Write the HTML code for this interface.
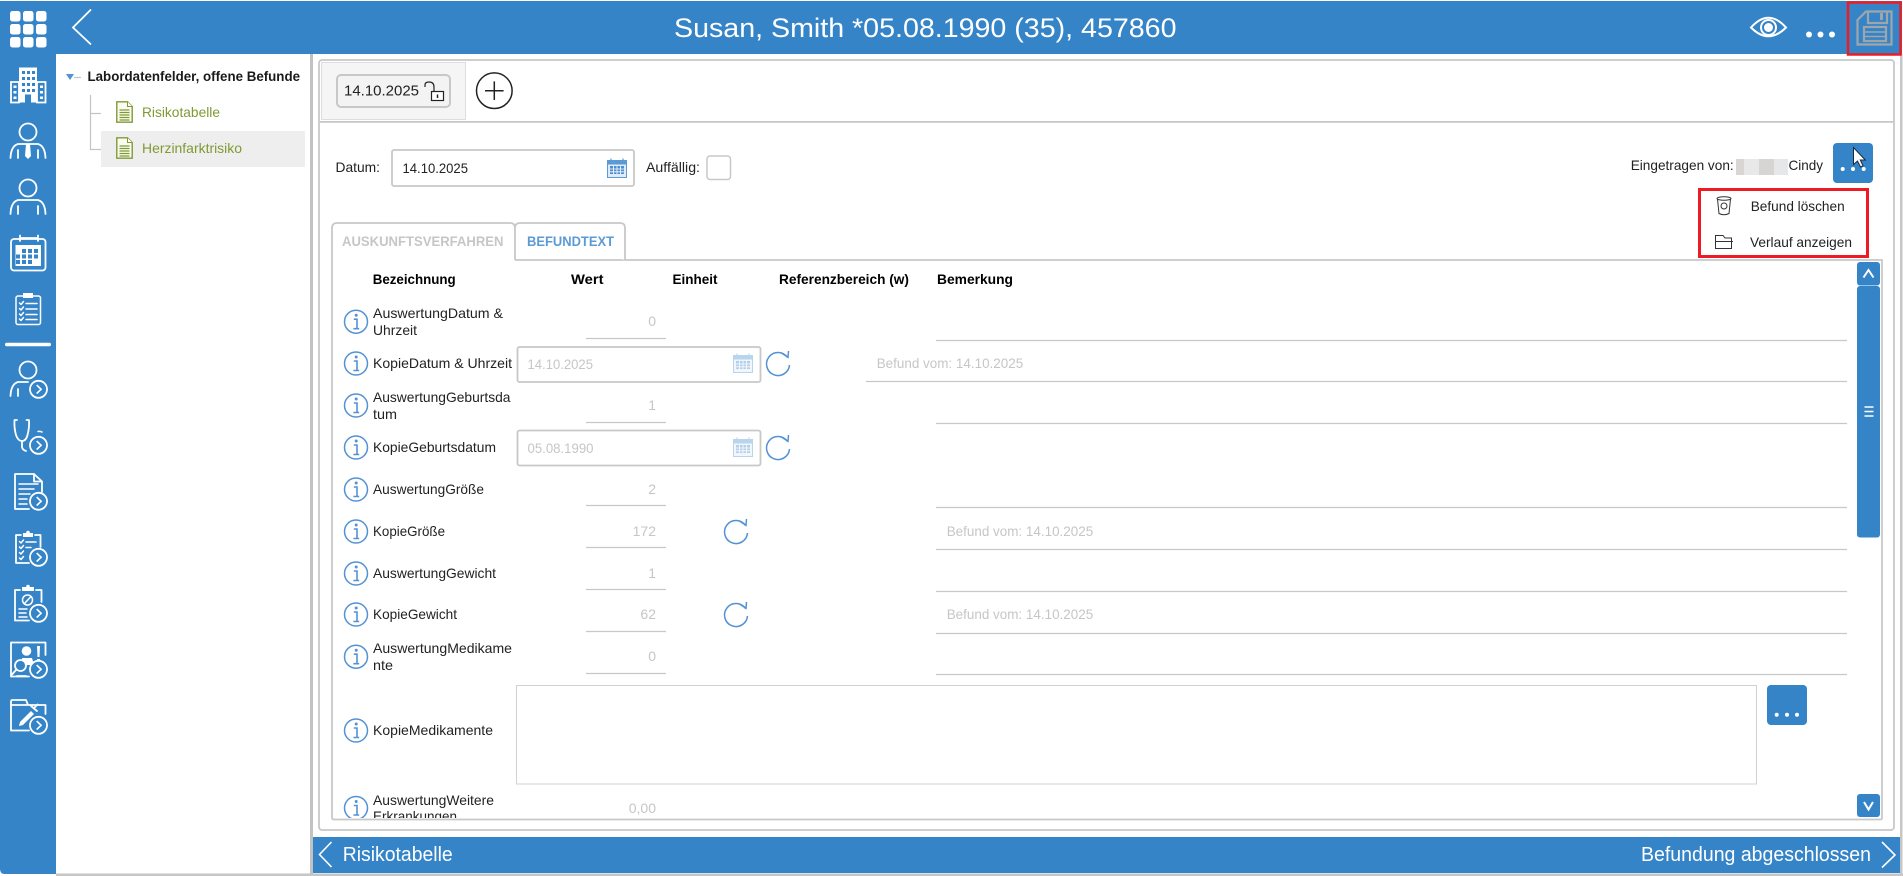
<!DOCTYPE html>
<html lang="de">
<head>
<meta charset="utf-8">
<title>Befund</title>
<style>
html,body{margin:0;padding:0;background:#fff;overflow:hidden}
svg{display:block}
text{font-family:"Liberation Sans",sans-serif;font-size:14px;fill:#222}
.b{font-weight:bold;fill:#000}
.v{fill:#c6c6c6}
.w{fill:#fff}
.l{stroke:#c8c8c8;stroke-width:1.2;fill:none}
.s{fill:none;stroke:#fff;stroke-width:1.8;stroke-linecap:round;stroke-linejoin:round}
.t{fill:none;stroke:#fff;stroke-width:1.5;stroke-linecap:round;stroke-linejoin:round}
.f{fill:#fff}
</style>
</head>
<body>
<svg xmlns="http://www.w3.org/2000/svg" width="1903" height="876" viewBox="0 0 1903 876">
<defs>
<g id="inf"><circle r="11.5" fill="#fff" stroke="#5392d4" stroke-width="1.5"/><path d="M-2.2-2.5H1V6.5M-2.6 7H3.2" fill="none" stroke="#5392d4" stroke-width="1.6"/><circle cx=".2" cy="-6.5" r="1.5" fill="#5392d4"/></g>
<g id="ref" fill="none" stroke="#5392d4" stroke-width="1.5"><path d="M11.5 0A11.5 11.5 0 1 1 9.5-7.5"/><path d="M3.5-12L10-7.7L10.5-14"/></g>
<g id="cal"><rect x=".5" y="2.5" width="19" height="17" fill="#dfecf8" stroke="#5b9bd5"/><rect x="1" y="3" width="18" height="3.5" fill="#5b9bd5"/><path d="M4 .5V3M16 .5V3" stroke="#5b9bd5" stroke-width="1.2"/><path d="M3 8h14v8H3z" fill="#4d8fd0"/><path d="M6.5 8v8M10 8v8M13.5 8v8M3 11h14M3 13.8h14" stroke="#fff" stroke-width=".8"/></g>
<g id="arr"><circle r="8.5" fill="#3584c8" stroke="#fff" stroke-width="1.8"/><path d="M-1.8-4.2L2.6 0L-1.8 4.2" fill="none" stroke="#fff" stroke-width="1.6"/></g>
<g id="doc"><path d="M.8.8H11.5L16.2 5.5V21.2H.8Z" fill="#fbfbf2" stroke="#7f9a34" stroke-width="1.4"/><path d="M11.5.8V5.5H16.2" fill="#fff" stroke="#7f9a34" stroke-width="1"/><path d="M3.5 9h10M3.5 11.5h10M3.5 14h10M3.5 16.5h10M3.5 19h10" stroke="#7f9a34" stroke-width="1.2"/></g>
<clipPath id="tc"><rect x="333" y="262" width="1548" height="556"/></clipPath>
</defs>

<!-- chrome -->
<rect width="1903" height="876" fill="#fff"/>
<rect x="56" y="873.5" width="1847" height="2.5" fill="#c6c6c6"/>
<path d="M0 1H1902V54H56V874H5Q0 874 0 869Z" fill="#3584c8"/>
<rect x="310" y="54" width="3" height="820" fill="#c2c2c2"/>
<rect x="1900" y="54" width="2.5" height="820" fill="#c6c6c6"/>

<!-- top left -->
<g class="f">
<rect x="10" y="11" width="10.5" height="10.5" rx="2.5"/><rect x="23" y="11" width="10.5" height="10.5" rx="2.5"/><rect x="36" y="11" width="10.5" height="10.5" rx="2.5"/>
<rect x="10" y="24" width="10.5" height="10.5" rx="2.5"/><rect x="23" y="24" width="10.5" height="10.5" rx="2.5"/><rect x="36" y="24" width="10.5" height="10.5" rx="2.5"/>
<rect x="10" y="37" width="10.5" height="10.5" rx="2.5"/><rect x="23" y="37" width="10.5" height="10.5" rx="2.5"/><rect x="36" y="37" width="10.5" height="10.5" rx="2.5"/>
</g>
<path d="M91 9.5L73 27.5L91 44.5" fill="none" stroke="#fff" stroke-width="1.8"/>
<text class="w" x="674" y="37" style="font-size:27px" textLength="502.500" lengthAdjust="spacingAndGlyphs">Susan, Smith *05.08.1990 (35), 457860</text>

<!-- top right -->
<path d="M1751 27.5Q1768.5 8 1786 27.5Q1768.5 45 1751 27.5Z" fill="none" stroke="#fff" stroke-width="2"/>
<circle cx="1768.5" cy="27.5" r="7.5" fill="none" stroke="#fff" stroke-width="2"/><circle cx="1768.5" cy="27.5" r="4.5" fill="#fff"/>
<circle cx="1809" cy="34.5" r="3" fill="#fff"/><circle cx="1820.5" cy="34.5" r="3" fill="#fff"/><circle cx="1832" cy="34.5" r="3" fill="#fff"/>
<rect x="1848" y="2.5" width="52.5" height="52" fill="none" stroke="#ed1c24" stroke-width="2.5"/>
<g fill="none" stroke="#9fa6ab" stroke-width="2.2"><path d="M1857.5 20L1866 11.5H1891.5V44.5H1857.5Z"/><path d="M1868 11.5V23H1887V11.5"/><rect x="1864" y="27" width="22" height="14"/><path d="M1864 32H1886M1864 36.5H1886" stroke-width="1.6"/></g>
<rect x="1880" y="13" width="3" height="7" fill="#9fa6ab"/>

<!-- sidebar icons -->
<!-- building -->
<g>
<path d="M19 67.5H37V102.5H31V94.5H25V102.5H19Z" class="f"/>
<path d="M11 82H19V102.5H11ZM37 82H45.5V102.5H37Z" fill="none" stroke="#fff" stroke-width="1.8"/>
<g fill="#3584c8"><rect x="22" y="71" width="3" height="3"/><rect x="27" y="71" width="3" height="3"/><rect x="32" y="71" width="3" height="3"/><rect x="22" y="77" width="3" height="3"/><rect x="27" y="77" width="3" height="3"/><rect x="32" y="77" width="3" height="3"/><rect x="22" y="83" width="3" height="3"/><rect x="27" y="83" width="3" height="3"/><rect x="32" y="83" width="3" height="3"/><rect x="22" y="89" width="3" height="3"/><rect x="27" y="89" width="3" height="3"/><rect x="32" y="89" width="3" height="3"/></g>
<g fill="#fff"><rect x="13.5" y="85.5" width="3" height="2.500"/><rect x="13.5" y="91" width="3" height="2.500"/><rect x="13.5" y="96.5" width="3" height="2.500"/><rect x="40" y="85.5" width="3" height="2.500"/><rect x="40" y="91" width="3" height="2.500"/><rect x="40" y="96.5" width="3" height="2.500"/></g>
</g>
<!-- person tie -->
<circle cx="28" cy="132" r="8.5" class="s"/>
<path class="s" d="M10.5 158Q11 146 18 144H38Q45 146 45.5 158M18 150V158M38 150V158"/>
<path class="f" d="M26 144H30L31 156L28 159L25 156Z"/>
<!-- person -->
<circle cx="28" cy="188" r="8.5" class="s"/>
<path class="s" d="M10.5 214Q11 202 18 200H38Q45 202 45.5 214M18 206V214M38 206V214"/>
<!-- calendar -->
<rect x="11" y="239" width="34.5" height="31.5" rx="3" class="s"/>
<path class="s" d="M20 235.5V241M38 235.5V241M20 238H38"/>
<rect x="15.5" y="245" width="25.5" height="21" fill="#fff"/>
<g fill="#3584c8"><rect x="22" y="249" width="4" height="4"/><rect x="28" y="249" width="4" height="4"/><rect x="34" y="249" width="4" height="4"/><rect x="16" y="254.500" width="4" height="4"/><rect x="22" y="254.500" width="4" height="4"/><rect x="28" y="254.500" width="4" height="4"/><rect x="34" y="254.500" width="4" height="4"/><rect x="16" y="260" width="4" height="4"/><rect x="22" y="260" width="4" height="4"/><rect x="28" y="260" width="4" height="4"/></g>
<!-- clipboard -->
<rect x="16" y="296" width="24.500" height="28.500" rx="2" class="t"/>
<path class="f" d="M23 293H33V298H23Z"/>
<g class="t"><path d="M19.500 303L21 304.500L23.500 301.500M19.500 308.500L21 310L23.500 307M19.500 314L21 315.500L23.500 312.500M19.500 319L21 320.500L23.500 317.500M26 303.500H37M26 309H37M26 314.500H37M26 319.500H37"/></g>
<rect x="5" y="342.700" width="46" height="3.500" rx="1.700" fill="#fff"/>
<!-- person arrow -->
<circle cx="28" cy="370" r="8.500" class="s"/>
<path class="s" d="M10.500 396Q11 384 18 382H28M18 389V396"/>
<use href="#arr" x="38.500" y="389.300"/>
<!-- stethoscope -->
<path class="s" d="M17 420H14.500Q14 428 16 435Q18 441 22 441Q26 441 27.500 435Q29.500 428 29 420H26.500M22 441V447Q22.500 450 26 451"/>
<path class="t" d="M38 431.500Q40 431 42 432"/>
<use href="#arr" x="38.500" y="445.300"/>
<!-- document -->
<path class="s" d="M34 474H15V509H29M34 474L42 481.500V492M34 474V481.500H42"/>
<path class="t" d="M19 484H38M19 489H34M19 494H30M19 499H27M19 504H27"/>
<use href="#arr" x="38.500" y="501.300"/>
<!-- clipboard arrow -->
<path class="s" d="M21 535H16V563H29M35 535H40.500V547"/>
<path class="f" d="M23 533H33V537H23Z"/><circle cx="28" cy="532.500" r="1.800" fill="#fff"/>
<path class="t" d="M19.500 541.500L21 543L23.500 540M19.500 547L21 548.500L23.500 545.500M19.500 552.500L21 554L23.500 551M19.500 558L21 559.500L23.500 556.500M26 542H36M26 547.500H31"/>
<use href="#arr" x="38.500" y="557.300"/>
<!-- clipboard no -->
<path class="s" d="M20 590H15V620.500H29M36 590H41.500V602"/>
<path class="f" d="M22 587H34V591H22Z"/><circle cx="28" cy="586.500" r="1.800" fill="#fff"/>
<circle cx="27.500" cy="600" r="5" class="t"/><path class="t" d="M24.500 603.500L31 596.500"/>
<path class="t" d="M19 609H27M19 613H26M19 617H27"/>
<use href="#arr" x="38.500" y="613.300"/>
<!-- person alert -->
<path class="s" d="M11 676.500V642.500H45.500V655M11 676.500H29"/>
<circle cx="26.500" cy="651" r="4.800" fill="#fff"/>
<path class="f" d="M22 658H32L34 665H22Z"/>
<path class="f" d="M37 646H40L39.500 657H37.500ZM37 659H40V662H37Z"/>
<circle cx="20.500" cy="665.500" r="5.500" fill="#3584c8" stroke="#fff" stroke-width="1.800"/>
<path class="s" d="M16 670L11.500 675M17 676H26" stroke-width="2.500"/>
<use href="#arr" x="38.500" y="669.300"/>
<!-- folder -->
<path class="s" d="M29 730.500H11V701.500Q11 700 12.500 700H26L28 705H45.500V714M11 705H28"/>
<path class="f" d="M19 726L20 722L31 711L34 714L23 725Z"/><path class="s" d="M31 706L37 711M34 708L37.500 704.500"/>
<use href="#arr" x="38.500" y="725.300"/>

<!-- tree -->
<rect x="101" y="131" width="204" height="36" fill="#eee"/>
<path d="M66 74H74L70 80Z" fill="#5392d4"/>
<path d="M74 77.500H81M90.500 95V149.500H101M90.500 113.500H101" stroke="#c4c4c4" stroke-width="1.200" fill="none"/>
<text x="87.500" y="81" style="font-weight:bold;fill:#1a1a1a" textLength="212.500" lengthAdjust="spacingAndGlyphs">Labordatenfelder, offene Befunde</text>
<use href="#doc" x="116" y="101"/>
<use href="#doc" x="116" y="137"/>
<text x="142" y="117" style="fill:#7f9a34" textLength="78" lengthAdjust="spacingAndGlyphs">Risikotabelle</text>
<text x="142" y="153" style="fill:#7f9a34" textLength="100" lengthAdjust="spacingAndGlyphs">Herzinfarktrisiko</text>

<!-- main panel -->
<rect x="319" y="60" width="1575" height="770" rx="3" fill="#fff" stroke="#c8c8c8" stroke-width="1.800"/>
<rect x="321.500" y="62.500" width="144" height="57" fill="#f5f5f5" stroke="#ddd"/>
<rect x="320" y="121" width="1573" height="1.800" fill="#c8c8c8"/>
<rect x="337" y="75" width="113" height="32" rx="4" fill="#f3f3f3" stroke="#c8c8c8" stroke-width="2"/>
<text x="344" y="95.500" style="font-size:15px" textLength="75" lengthAdjust="spacingAndGlyphs">14.10.2025</text>
<path d="M425 87V85Q425 82 429 82Q434 82 434 87V91" fill="none" stroke="#222" stroke-width="1.200"/>
<rect x="431.500" y="91.500" width="12" height="9" fill="#fff" stroke="#222" stroke-width="1.200"/>
<path d="M437.500 94.500V98" stroke="#222" stroke-width="1.500"/>
<circle cx="494.300" cy="90.700" r="17.800" fill="#fff" stroke="#222" stroke-width="1.500"/>
<path d="M485 90.700H503.600M494.300 81.400V100" stroke="#222" stroke-width="1.500"/>

<!-- datum -->
<text x="335.500" y="172" textLength="44.500" lengthAdjust="spacingAndGlyphs">Datum:</text>
<rect x="392" y="150" width="242" height="36" rx="2" fill="#fff" stroke="#c8c8c8" stroke-width="1.800"/>
<text x="402.500" y="173" textLength="65.500" lengthAdjust="spacingAndGlyphs">14.10.2025</text>
<use href="#cal" x="607" y="158"/>
<text x="646" y="172" textLength="54" lengthAdjust="spacingAndGlyphs">Auffällig:</text>
<rect x="707" y="156" width="23.500" height="23.500" rx="3" fill="#fff" stroke="#c8c8c8" stroke-width="1.500"/>

<!-- eingetragen -->
<text x="1630.700" y="170" textLength="103" lengthAdjust="spacingAndGlyphs">Eingetragen von:</text>
<rect x="1736" y="159" width="8" height="16" fill="#d9d5d5"/><rect x="1744" y="159" width="15" height="16" fill="#e9e8e8"/><rect x="1759" y="159" width="15" height="16" fill="#d7d4d4"/><rect x="1774" y="159" width="14" height="16" fill="#e6e7e9"/>
<text x="1788.500" y="170" textLength="34.500" lengthAdjust="spacingAndGlyphs">Cindy</text>
<rect x="1833" y="143" width="40" height="40" rx="4" fill="#3584c8"/>
<circle cx="1842.700" cy="169" r="2" fill="#fff"/><circle cx="1853" cy="169" r="2" fill="#fff"/><circle cx="1863.700" cy="169" r="2" fill="#fff"/>
<path d="M1853.500 147.500V164.500L1857.500 161L1860.500 167L1863 165.800L1860.300 160H1865.300Z" fill="#fff" stroke="#1a2a3a" stroke-width="1"/>

<!-- tabs + table frame -->
<path d="M515 260H1882V818.500Q1882 819.500 1880 819.500H334Q332 819.500 332 817.500V228Q332 223 337 223H510Q515 223 515 228V260" fill="#fff" stroke="#c8c8c8" stroke-width="1.800"/>
<path d="M515 228Q515 223 520 223H620Q625 223 625 228V260" fill="#fff" stroke="#c8c8c8" stroke-width="1.800"/>
<rect x="333" y="259" width="181" height="3" fill="#fff"/>
<text x="342" y="246" style="font-weight:bold;fill:#c6c6c6" textLength="161.500" lengthAdjust="spacingAndGlyphs">AUSKUNFTSVERFAHREN</text>
<text x="527" y="246" style="font-weight:bold;fill:#5b9bd5" textLength="87" lengthAdjust="spacingAndGlyphs">BEFUNDTEXT</text>

<!-- menu -->
<rect x="1699.500" y="189.500" width="168" height="67" fill="#fff" stroke="#ed1c24" stroke-width="3"/>
<g fill="none" stroke="#333" stroke-width="1"><ellipse cx="1724" cy="198.500" rx="7" ry="1.800"/><path d="M1717.500 199L1719 213.500Q1724 216 1729 213.500L1730.500 199"/><circle cx="1724" cy="206" r="3"/></g>
<text x="1750.700" y="211" textLength="94" lengthAdjust="spacingAndGlyphs">Befund löschen</text>
<path d="M1715.500 248.500V235.500H1723L1725 238H1731.500V248.500ZM1715.500 241.500H1733" fill="none" stroke="#333" stroke-width="1"/>
<text x="1750" y="247" textLength="102" lengthAdjust="spacingAndGlyphs">Verlauf anzeigen</text>

<!-- table headers -->
<text class="b" x="372.700" y="284" textLength="83" lengthAdjust="spacingAndGlyphs">Bezeichnung</text>
<text class="b" x="571" y="284" textLength="32.500" lengthAdjust="spacingAndGlyphs">Wert</text>
<text class="b" x="672.500" y="284" textLength="45" lengthAdjust="spacingAndGlyphs">Einheit</text>
<text class="b" x="779" y="284" textLength="130" lengthAdjust="spacingAndGlyphs">Referenzbereich (w)</text>
<text class="b" x="937" y="284" textLength="76" lengthAdjust="spacingAndGlyphs">Bemerkung</text>

<!-- info icons -->
<use href="#inf" x="356" y="321.700"/><use href="#inf" x="356" y="363.500"/><use href="#inf" x="356" y="405.500"/><use href="#inf" x="356" y="447.500"/><use href="#inf" x="356" y="489.500"/><use href="#inf" x="356" y="531.500"/><use href="#inf" x="356" y="573.500"/><use href="#inf" x="356" y="614.500"/><use href="#inf" x="356" y="656.700"/><use href="#inf" x="356" y="730.500"/>
<g clip-path="url(#tc)"><use href="#inf" x="356" y="808"/>
<text x="373" y="805" textLength="121" lengthAdjust="spacingAndGlyphs">AuswertungWeitere</text>
<text x="373" y="821" textLength="84" lengthAdjust="spacingAndGlyphs">Erkrankungen</text></g>

<!-- labels -->
<text x="373" y="318" textLength="130" lengthAdjust="spacingAndGlyphs">AuswertungDatum &amp;</text>
<text x="373" y="335" textLength="44" lengthAdjust="spacingAndGlyphs">Uhrzeit</text>
<text x="373" y="368" textLength="139" lengthAdjust="spacingAndGlyphs">KopieDatum &amp; Uhrzeit</text>
<text x="373" y="402" textLength="137.500" lengthAdjust="spacingAndGlyphs">AuswertungGeburtsda</text>
<text x="373" y="419" textLength="24" lengthAdjust="spacingAndGlyphs">tum</text>
<text x="373" y="452" textLength="123" lengthAdjust="spacingAndGlyphs">KopieGeburtsdatum</text>
<text x="373" y="494" textLength="111" lengthAdjust="spacingAndGlyphs">AuswertungGröße</text>
<text x="373" y="536" textLength="72" lengthAdjust="spacingAndGlyphs">KopieGröße</text>
<text x="373" y="578" textLength="123" lengthAdjust="spacingAndGlyphs">AuswertungGewicht</text>
<text x="373" y="619" textLength="84" lengthAdjust="spacingAndGlyphs">KopieGewicht</text>
<text x="373" y="653" textLength="139" lengthAdjust="spacingAndGlyphs">AuswertungMedikame</text>
<text x="373" y="670" textLength="20" lengthAdjust="spacingAndGlyphs">nte</text>
<text x="373" y="735" textLength="120" lengthAdjust="spacingAndGlyphs">KopieMedikamente</text>

<!-- values -->
<g text-anchor="end">
<text class="v" x="656" y="326">0</text>
<text class="v" x="656" y="410">1</text>
<text class="v" x="656" y="494">2</text>
<text class="v" x="656" y="536">172</text>
<text class="v" x="656" y="578">1</text>
<text class="v" x="656" y="619">62</text>
<text class="v" x="656" y="661">0</text>
<text class="v" x="656" y="813">0,00</text>
</g>
<path class="l" d="M586 338.500H666M586 422.500H666M586 505.500H666M586 547.500H666M586 589.500H666M586 631.500H666M586 673.500H666"/>

<!-- date fields -->
<rect x="517.500" y="347" width="243" height="35" rx="2" fill="#fff" stroke="#c8c8c8" stroke-width="1.800"/>
<text class="v" x="527.500" y="369" textLength="65.500" lengthAdjust="spacingAndGlyphs">14.10.2025</text>
<use href="#cal" x="733" y="353" opacity=".42"/>
<rect x="517.500" y="430.500" width="243" height="35" rx="2" fill="#fff" stroke="#c8c8c8" stroke-width="1.800"/>
<text class="v" x="527.500" y="453" textLength="66" lengthAdjust="spacingAndGlyphs">05.08.1990</text>
<use href="#cal" x="733" y="437" opacity=".42"/>
<use href="#ref" x="778" y="365"/><use href="#ref" x="778" y="449"/><use href="#ref" x="736" y="533"/><use href="#ref" x="736" y="616"/>

<!-- remark lines -->
<path class="l" d="M936 340.500H1847M866 381.500H1847M936 423.500H1847M936 507.500H1847M936 549.500H1847M936 591.500H1847M936 633.500H1847M936 674.500H1847"/>
<text class="v" x="876.700" y="368" textLength="146.500" lengthAdjust="spacingAndGlyphs">Befund vom: 14.10.2025</text>
<text class="v" x="946.700" y="536" textLength="146.500" lengthAdjust="spacingAndGlyphs">Befund vom: 14.10.2025</text>
<text class="v" x="946.700" y="619" textLength="146.500" lengthAdjust="spacingAndGlyphs">Befund vom: 14.10.2025</text>

<!-- textarea -->
<rect x="516.500" y="685.500" width="1240" height="98.500" fill="#fff" stroke="#d2d2d2" stroke-width="1"/>
<rect x="1767" y="685" width="40" height="40" rx="4" fill="#3584c8"/>
<circle cx="1776.700" cy="714.700" r="2" fill="#fff"/><circle cx="1787" cy="714.700" r="2" fill="#fff"/><circle cx="1797" cy="714.700" r="2" fill="#fff"/>

<!-- scrollbar -->
<rect x="1857" y="262" width="23" height="23.500" rx="3" fill="#3584c8"/>
<path d="M1863.500 277.500L1868.500 270L1873.500 277.500" fill="none" stroke="#fff" stroke-width="2"/>
<rect x="1857" y="286" width="23" height="251.500" rx="3" fill="#3584c8"/>
<path d="M1864.500 407H1873.500M1864.500 411.500H1873.500M1864.500 416H1873.500" stroke="#fff" stroke-width="1.600"/>
<rect x="1857" y="794" width="23" height="23" rx="3" fill="#3584c8"/>
<path d="M1864 802L1868.500 809.500L1873 802" fill="none" stroke="#fff" stroke-width="2"/>

<!-- bottom bar -->
<rect x="313" y="837" width="1587" height="36" fill="#3584c8"/>
<path d="M331.500 842L319.500 854.500L331.500 867" fill="none" stroke="#fff" stroke-width="1.600"/>
<text class="w" x="342.700" y="861" style="font-size:20px" textLength="110" lengthAdjust="spacingAndGlyphs">Risikotabelle</text>
<text class="w" x="1641" y="861" style="font-size:20px" textLength="230" lengthAdjust="spacingAndGlyphs">Befundung abgeschlossen</text>
<path d="M1882 842L1895 855L1882 867.500" fill="none" stroke="#fff" stroke-width="1.600"/>
</svg>
</body>
</html>
